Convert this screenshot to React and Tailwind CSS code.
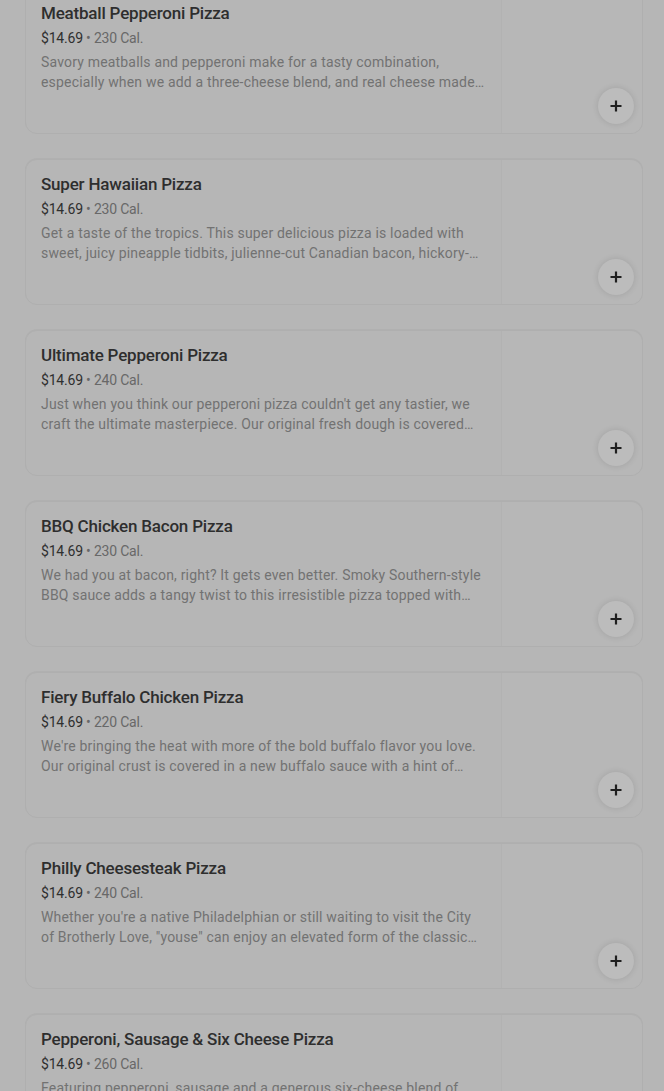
const items = [
  {
    name: 'Meatball Pepperoni Pizza',
    cal: '230 Cal.',
    desc: 'Savory meatballs and pepperoni make for a tasty combination, especially when we add a three-cheese blend, and real cheese made from mozzarella.',
  },
  {
    name: 'Super Hawaiian Pizza',
    cal: '230 Cal.',
    desc: 'Get a taste of the tropics. This super delicious pizza is loaded with sweet, juicy pineapple tidbits, julienne-cut Canadian bacon, hickory-smoked bacon and a three-cheese blend.',
  },
  {
    name: 'Ultimate Pepperoni Pizza',
    cal: '240 Cal.',
    desc: "Just when you think our pepperoni pizza couldn't get any tastier, we craft the ultimate masterpiece. Our original fresh dough is covered with our signature sauce.",
  },
  {
    name: 'BBQ Chicken Bacon Pizza',
    cal: '230 Cal.',
    desc: 'We had you at bacon, right? It gets even better. Smoky Southern-style BBQ sauce adds a tangy twist to this irresistible pizza topped with grilled chicken.',
  },
  {
    name: 'Fiery Buffalo Chicken Pizza',
    cal: '220 Cal.',
    desc: "We're bringing the heat with more of the bold buffalo flavor you love. Our original crust is covered in a new buffalo sauce with a hint of garlic and spice.",
  },
  {
    name: 'Philly Cheesesteak Pizza',
    cal: '240 Cal.',
    desc: 'Whether you\'re a native Philadelphian or still waiting to visit the City of Brotherly Love, "youse" can enjoy an elevated form of the classic cheesesteak.',
  },
  {
    name: 'Pepperoni, Sausage & Six Cheese Pizza',
    cal: '260 Cal.',
    desc: 'Featuring pepperoni, sausage and a generous six-cheese blend of mozzarella, parmesan, romano, asiago, fontina and provolone.',
  },
]

function PlusIcon() {
  return (
    <svg width="14" height="14" viewBox="0 0 14 14" fill="none">
      <path d="M7 1.5v11M1.5 7h11" stroke="#1f1f1f" strokeWidth="2.2" />
    </svg>
  )
}

function MenuCard({ item }) {
  return (
    <div className="relative flex h-[146px] rounded-xl border border-[#afafaf] bg-[#b6b6b6] shadow-[0_-1px_0_#b0b0b0]">
      <div className="flex-1 min-w-0 pl-[15px] pr-4 pt-3">
        <h3 className="text-[17px] leading-6 font-medium tracking-[-0.2px] text-[#2e2e2e] truncate">{item.name}</h3>
        <p className="mt-[3px] text-sm leading-5 tracking-[-0.2px]">
          <span className="text-[#2f2f2f]">$14.69</span>
          <span className="text-[#686868]"> • {item.cal}</span>
        </p>
        <p className="mt-1 text-sm leading-5 tracking-[0.18px] text-[#727272] line-clamp-2">{item.desc}</p>
      </div>
      <div className="w-[141px] shrink-0 rounded-r-xl border-l border-[#b2b2b2] bg-[#b7b7b7]" />
      <button className="absolute right-[8px] bottom-[9px] flex h-9 w-9 items-center justify-center rounded-full bg-[#bcbcbc] shadow-[0_0_6px_rgba(0,0,0,0.12)]">
        <PlusIcon />
      </button>
    </div>
  )
}

export default function App() {
  return (
    <div
      className="min-h-screen w-full overflow-hidden bg-[#b6b6b6] pl-[25px] pr-[21px]"
      style={{ fontFamily: 'Roboto, "Liberation Sans", sans-serif' }}
    >
      <div className="-mt-[12px] flex flex-col gap-[25px]">
        {items.map(item => (
          <MenuCard key={item.name} item={item} />
        ))}
      </div>
    </div>
  )
}
